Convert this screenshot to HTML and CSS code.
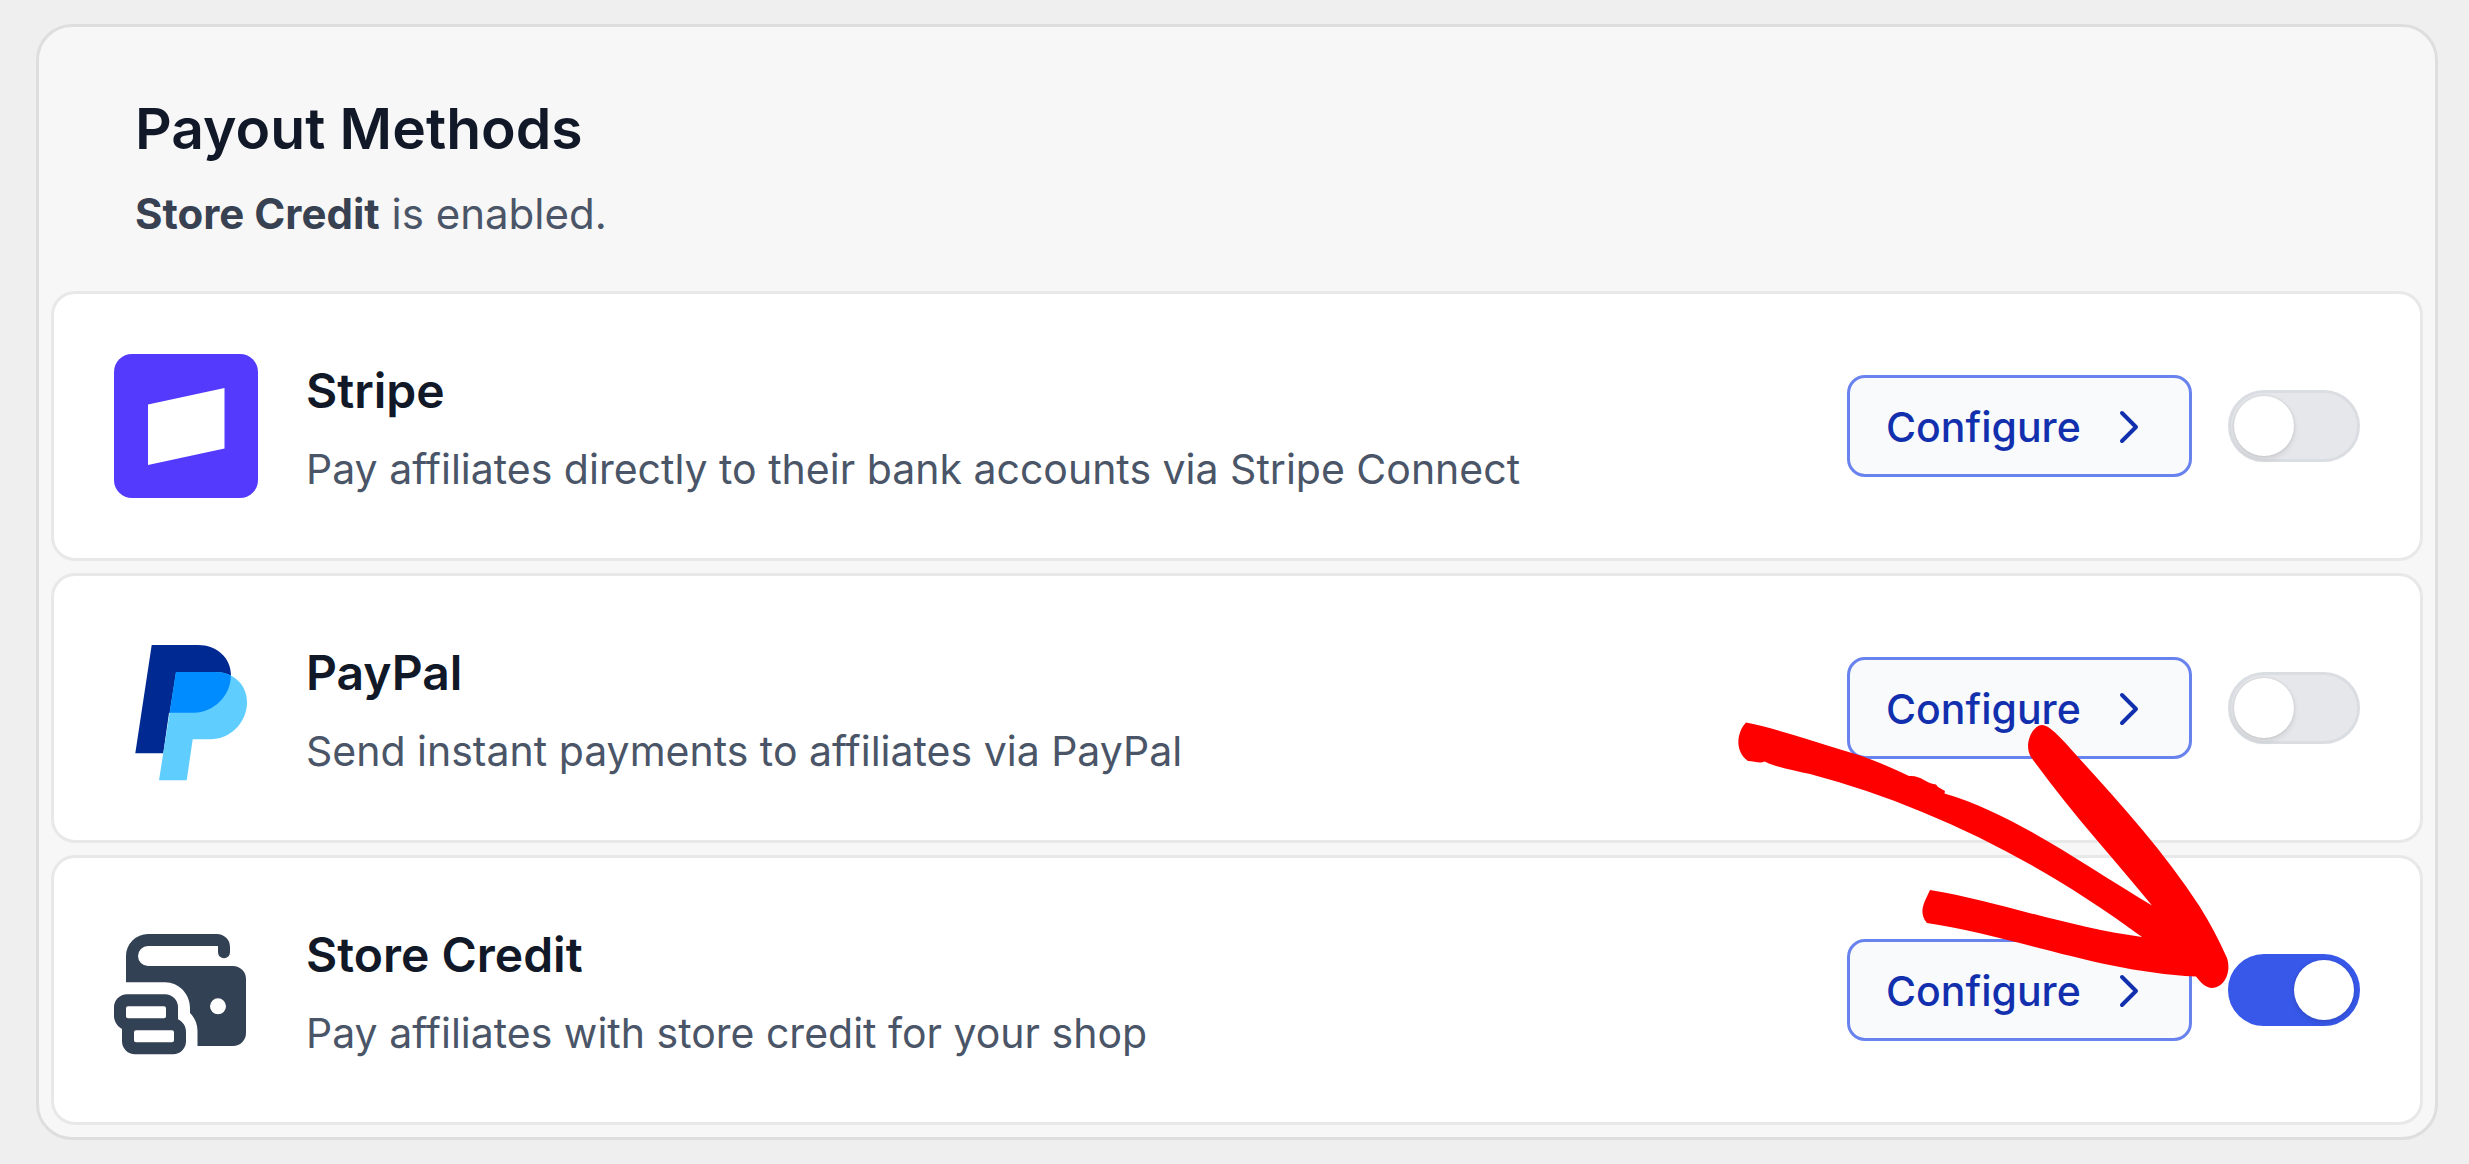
FILE: index.html
```html
<!DOCTYPE html>
<html lang="en">
<head>
<meta charset="utf-8">
<title>Payout Methods</title>
<link rel="stylesheet" href="styles.css">
</head>
<body>
<main class="panel">
  <header class="panel-header">
    <h1 class="panel-title">Payout Methods</h1>
    <p class="panel-status"><strong>Store Credit</strong> is enabled.</p>
  </header>
  <ul class="methods">
    <li class="method">
      <svg class="method-icon" viewBox="0 0 144 144" aria-hidden="true">
        <rect width="144" height="144" rx="18" fill="#533afd"/>
        <path d="M34 50.500 110.500 34V94.500L34 111Z" fill="#fff"/>
      </svg>
      <div class="method-text">
        <h2 class="method-name" id="stripe">Stripe</h2>
        <p class="method-desc">Pay affiliates directly to their bank accounts via Stripe Connect</p>
      </div>
      <button class="configure" type="button">Configure
        <svg class="chevron" viewBox="0 0 24 36" aria-hidden="true"><path d="M5 4 19 18 5 32"/></svg>
      </button>
      <input class="toggle" type="checkbox" role="switch" aria-labelledby="stripe">
    </li>
    <li class="method">
      <svg class="method-icon" viewBox="0 0 144 144" aria-hidden="true">
        <path d="M37.700 9H84C103 9 117 22 117 39L80 77 55 77 49.300 117.300H21.300Z" fill="#002991"/>
        <path d="M62 36H101C120 36 133 49 133 66 133 87 116 103.300 96 103.300H78.700L72.700 144.300H45Z" fill="#60cdff"/>
        <path d="M62 36H101C107 36 112 37 116.800 39.500 117 60 99 76.700 80 76.700H55.700Z" fill="#008cff"/>
      </svg>
      <div class="method-text">
        <h2 class="method-name" id="paypal">PayPal</h2>
        <p class="method-desc">Send instant payments to affiliates via PayPal</p>
      </div>
      <button class="configure" type="button">Configure
        <svg class="chevron" viewBox="0 0 24 36" aria-hidden="true"><path d="M5 4 19 18 5 32"/></svg>
      </button>
      <input class="toggle" type="checkbox" role="switch" aria-labelledby="paypal">
    </li>
    <li class="method">
      <svg class="method-icon" viewBox="0 0 144 144" fill="#334155" fill-rule="evenodd" aria-hidden="true">
        <path d="M12 64.300V38A22 22 0 0 1 34 16H103A13 13 0 0 1 116 29V34.300A6 6 0 0 1 104 34.300V28H34A10 10 0 0 0 34 48H119A13 13 0 0 1 132 61V115A13 13 0 0 1 119 128H83.500V113C83.500 105 80 99 76 95V90C76 76 65 64.300 51 64.300ZM104 80.300A8 8 0 1 0 104 96.300 8 8 0 1 0 104 80.300Z"/>
        <path d="M13 76.300H51A13 13 0 0 1 64 89.300V101.300C69 104 72 108 72 114V123.300A13 13 0 0 1 59 136.300H21A13 13 0 0 1 8 123.300V111C3 108 0 103 0 98V89.300A13 13 0 0 1 13 76.300ZM14 88.300A2 2 0 0 0 12 90.300V98.300A2 2 0 0 0 14 100.300H50A2 2 0 0 0 52 98.300V90.300A2 2 0 0 0 50 88.300ZM22 112.300A2 2 0 0 0 20 114.300V122.300A2 2 0 0 0 22 124.300H58A2 2 0 0 0 60 122.300V114.300A2 2 0 0 0 58 112.300Z"/>
      </svg>
      <div class="method-text">
        <h2 class="method-name" id="credit">Store Credit</h2>
        <p class="method-desc">Pay affiliates with store credit for your shop</p>
      </div>
      <button class="configure" type="button">Configure
        <svg class="chevron" viewBox="0 0 24 36" aria-hidden="true"><path d="M5 4 19 18 5 32"/></svg>
      </button>
      <input class="toggle" type="checkbox" role="switch" aria-labelledby="credit" checked>
      <svg class="arrow" viewBox="1720 710 510 290" aria-hidden="true">
        <path d="M1746 722.500C1778 729 1812 741 1842 750 1868 757 1890 767 1909 776 1921 775 1925 783 1936 784.500L1938 787 1945 791 1944.500 793.500C2014 814 2081 863 2152 905.500 2116 861 2071 813 2031 757 2023 744 2033 725 2042 725 2050 725 2063 740 2078 757 2118 801 2163 850 2200 907 2210 923 2219 940 2227 958 2232 974 2223 988 2212 988 2206 988 2201 983 2196 976.500 2101 972 2018 937 1927 923 1918 912 1924 903 1930 890 1998 901 2066 927 2142 937 2035 858 1923 804 1810 774 1792 770 1776 767 1764.500 761.500 1760 764 1754 761 1748 761 1734 751 1737 732 1746 722.500Z"/>
      </svg>
    </li>
  </ul>
</main>
</body>
</html>
```
FILE: styles.css
```css
* {
  box-sizing: border-box;
}

body {
  margin: 0;
  padding: 24px 31px 24px 36px;
  background: #efefef;
  color: #4a5568;
  font-family: Inter, "Liberation Sans", sans-serif;
  font-size: 41px;
  line-height: 58px;
}

h1,
h2,
p,
ul {
  margin: 0;
  padding: 0;
}

.panel {
  padding: 12px;
  background: #f7f7f7;
  border: 3px solid #dedede;
  border-radius: 36px;
}

.panel-header {
  display: flex;
  flex-direction: column;
  gap: 20px;
  padding: 54px 84px 48px;
}

.panel-title {
  color: #111827;
  font-size: 57px;
  font-weight: 600;
  line-height: 72px;
}

.panel-status {
  font-size: 42px;
}

.panel-status strong {
  color: #374151;
  font-weight: 700;
}

.methods {
  display: flex;
  flex-direction: column;
  gap: 12px;
  list-style: none;
}

.method {
  position: relative;
  display: flex;
  align-items: center;
  padding: 60px;
  background: #fff;
  border: 3px solid #e8e8e8;
  border-radius: 24px;
}

.method-icon {
  flex: none;
  width: 144px;
  height: 144px;
  margin-right: 48px;
  overflow: visible;
}

.method-text {
  display: flex;
  flex: 1;
  flex-direction: column;
  gap: 12px;
}

.method-name {
  color: #111827;
  font-size: 48px;
  font-weight: 600;
  line-height: 74px;
}

.configure {
  display: flex;
  flex: none;
  align-items: center;
  justify-content: space-between;
  width: 345px;
  height: 102px;
  margin-right: 36px;
  padding: 2px 48px 0 36px;
  background: #f9fafc;
  border: 3px solid #6882ee;
  border-radius: 18px;
  color: #1230ae;
  font: inherit;
  font-weight: 500;
}

.chevron {
  width: 24px;
  height: 36px;
  fill: none;
  stroke: currentColor;
  stroke-width: 4;
  stroke-linecap: round;
  stroke-linejoin: round;
}

.toggle {
  flex: none;
  width: 132px;
  height: 72px;
  margin: 0;
  padding: 3px;
  appearance: none;
  background: #e5e7eb;
  border: 3px solid #dadde1;
  border-radius: 36px;
}

.toggle::before {
  display: block;
  width: 60px;
  height: 60px;
  background: #fff;
  border-radius: 50%;
  box-shadow: 0 3px 6px rgba(0, 0, 0, 0.1), 0 0 3px rgba(0, 0, 0, 0.1);
  content: "";
}

.toggle:checked {
  background: #3858e9;
  border-color: #3858e9;
}

.toggle:checked::before {
  margin-left: auto;
}

/* Hand-drawn arrow that points at the enabled switch */
.arrow {
  position: absolute;
  right: 190px;
  bottom: 122px;
  width: 510px;
  height: 290px;
  fill: #f00;
  pointer-events: none;
}
```
